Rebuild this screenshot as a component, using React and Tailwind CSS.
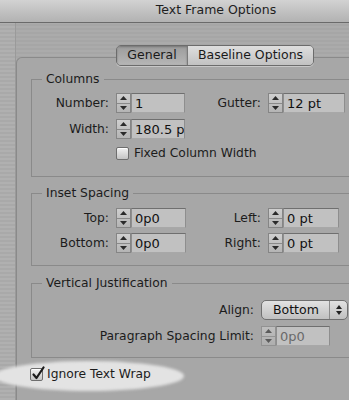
import React from "react";

const font = { fontFamily: '"DejaVu Sans", "Liberation Sans", sans-serif' };

const Spinner = ({ disabled }) => (
  <div
    className={
      "flex h-[20px] w-[15px] flex-col border border-[#858585] bg-gradient-to-b from-[#cfcfcf] to-[#b4b4b4] " +
      (disabled ? "opacity-60" : "")
    }
  >
    <div className="flex flex-1 items-center justify-center border-b border-[#8a8a8a]">
      <svg width="7" height="4" viewBox="0 0 7 4">
        <path d="M0 4 L3.5 0 L7 4 Z" fill="#2a2a2a" />
      </svg>
    </div>
    <div className="flex flex-1 items-center justify-center">
      <svg width="7" height="4" viewBox="0 0 7 4">
        <path d="M0 0 L3.5 4 L7 0 Z" fill="#2a2a2a" />
      </svg>
    </div>
  </div>
);

const Field = ({ value, w, disabled }) => (
  <div className="flex items-center">
    <Spinner disabled={disabled} />
    <div
      className={
        "flex h-[20px] items-center overflow-hidden whitespace-nowrap border border-t-[#6f6f6f] border-x-[#8e8e8e] border-b-[#a8a8a8] bg-[#c1c1c1] pl-[3px] text-[13px] leading-none " +
        (disabled ? "text-[#6a6a6a]" : "text-[#111]")
      }
      style={{ width: w }}
    >
      {value}
    </div>
  </div>
);

const Label = ({ children, w }) => (
  <div className="mr-[7px] shrink-0 whitespace-nowrap text-right text-[12.3px] text-[#1c1c1c]" style={{ width: w }}>
    {children}
  </div>
);

const Group = ({ title, className, children }) => (
  <fieldset className={"ml-[14px] w-[420px] border border-[#8a8a8a] " + className}>
    <legend className="ml-[10px] px-[4px] text-[12.3px] leading-[14px] text-[#1c1c1c]">{title}</legend>
    {children}
  </fieldset>
);

const Check = ({ checked }) => (
  <div className="relative h-[13px] w-[13px] shrink-0 rounded-[2px] border border-[#6e6e6e] bg-gradient-to-b from-[#f2f2f2] to-[#c4c4c4] shadow-[inset_0_1px_0_#fff]">
    {checked && (
      <svg className="absolute -top-[3px] left-[1px]" width="13" height="15" viewBox="0 0 13 15">
        <path d="M1.5 8.5 L4.5 12 L11.5 1.5" fill="none" stroke="#1a1a1a" strokeWidth="2.2" strokeLinecap="round" strokeLinejoin="round" />
      </svg>
    )}
  </div>
);

export default function App() {
  return (
    <div className="h-[400px] w-[349px] overflow-hidden" style={font}>
      <div className="w-[432px] bg-[repeating-linear-gradient(0deg,#ababab_0px,#ababab_2px,#a6a6a6_2px,#a6a6a6_4px)]">
        {/* title bar */}
        <div className="flex h-[23px] items-center justify-center border-b border-[#6a6a6a] bg-gradient-to-b from-[#d2d2d2] to-[#b2b2b2] pb-[1px] text-[12.5px] text-[#1e1e1e]">
          Text Frame Options
        </div>

        <div className="flex h-[377px]">
          <div className="w-[16px] shrink-0 border-r border-[#9a9a9a] bg-[repeating-linear-gradient(0deg,#b0b0b0_0px,#b0b0b0_2px,#a9a9a9_2px,#a9a9a9_4px)]" />
          <div className="flex-1 pt-[34px]">
            <div className="h-full rounded-tl-[6px] border-l border-t border-[#8a8a8a] bg-[#a7a7a7]">
              {/* tabs */}
              <div className="-mt-[13px] ml-[99px] flex h-[21px] w-[198px] overflow-hidden rounded-[5px] border border-[#6c6c6c] text-[12.5px] text-[#1a1a1a] shadow-[0_1px_0_#c8c8c8]">
                <div className="flex w-[71px] items-center justify-center border-r border-[#7a7a7a] bg-gradient-to-b from-[#9c9c9c] to-[#b6b6b6] shadow-[inset_0_1px_2px_#777]">
                  General
                </div>
                <div className="flex flex-1 items-center justify-center bg-gradient-to-b from-[#dedede] to-[#c2c2c2]">
                  Baseline Options
                </div>
              </div>

              <Group title="Columns" className="mt-[6px] pb-[16px] pt-[7px]">
                <div className="flex items-center">
                  <Label w={77}>Number:</Label>
                  <Field value="1" w={54} />
                  <Label w={76}>Gutter:</Label>
                  <Field value="12 pt" w={62} />
                </div>
                <div className="mt-[6px] flex items-center">
                  <Label w={77}>Width:</Label>
                  <Field value="180.5 p" w={54} />
                </div>
                <div className="ml-[84px] mt-[8px] flex h-[13px] items-center gap-[5px] text-[12.3px] text-[#1c1c1c]">
                  <Check />
                  Fixed Column Width
                </div>
              </Group>

              <Group title="Inset Spacing" className="mt-[9px] pb-[12px] pt-[8px]">
                <div className="flex items-center">
                  <Label w={77}>Top:</Label>
                  <Field value="0p0" w={55} />
                  <Label w={75}>Left:</Label>
                  <Field value="0 pt" w={56} />
                </div>
                <div className="mt-[5px] flex items-center">
                  <Label w={77}>Bottom:</Label>
                  <Field value="0p0" w={55} />
                  <Label w={75}>Right:</Label>
                  <Field value="0 pt" w={56} />
                </div>
              </Group>

              <Group title="Vertical Justification" className="mt-[10px] pb-[11px] pt-[10px]">
                <div className="flex items-center">
                  <Label w={222}>Align:</Label>
                  <div className="flex h-[20px] w-[87px] overflow-hidden rounded-[5px] border border-[#707070] bg-gradient-to-b from-[#e2e2e2] to-[#c0c0c0] text-[12.5px] text-[#111]">
                    <div className="flex w-[68px] items-center pl-[11px]">Bottom</div>
                    <div className="flex w-[18px] flex-col items-center justify-center gap-[2px] border-l border-[#8c8c8c]">
                      <svg width="6" height="4" viewBox="0 0 6 4">
                        <path d="M0 4 L3 0 L6 4 Z" fill="#222" />
                      </svg>
                      <svg width="6" height="4" viewBox="0 0 6 4">
                        <path d="M0 0 L3 4 L6 0 Z" fill="#222" />
                      </svg>
                    </div>
                  </div>
                </div>
                <div className="mt-[6px] flex items-center">
                  <Label w={222}>Paragraph Spacing Limit:</Label>
                  <Field value="0p0" w={54} disabled />
                </div>
              </Group>

              <div className="relative ml-[13px] mt-[10px] flex h-[13px] items-center gap-[4px] text-[12.3px] text-[#1c1c1c]">
                <div className="absolute -left-[36px] -top-[7px] h-[30px] w-[190px] rounded-[50%] bg-[#e3e3e3] blur-[1.5px]" />
                <div className="relative">
                  <Check checked />
                </div>
                <span className="relative">Ignore Text Wrap</span>
              </div>
            </div>
          </div>
        </div>
      </div>
    </div>
  );
}
